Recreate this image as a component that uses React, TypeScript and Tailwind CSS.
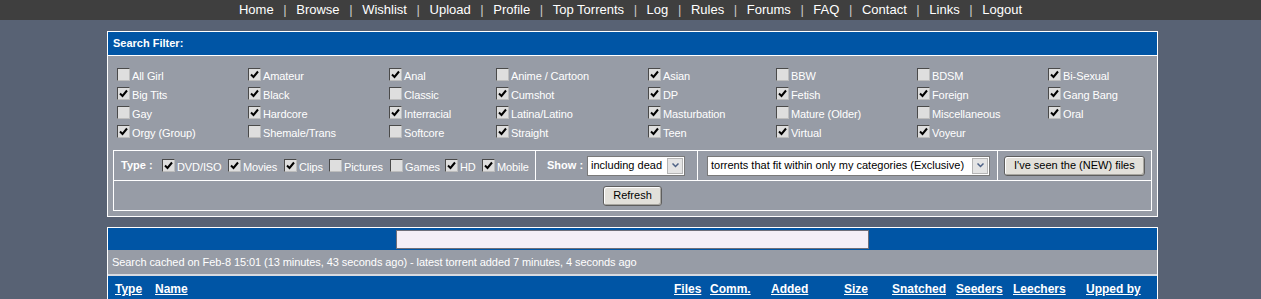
import React from 'react';

const navLinks = ['Home', 'Browse', 'Wishlist', 'Upload', 'Profile', 'Top Torrents', 'Log', 'Rules', 'Forums', 'FAQ', 'Contact', 'Links', 'Logout'];

// category rows, 8 columns each
const categories: [string, boolean][][] = [
  [['All Girl', false], ['Amateur', true], ['Anal', true], ['Anime / Cartoon', false], ['Asian', true], ['BBW', false], ['BDSM', false], ['Bi-Sexual', true]],
  [['Big Tits', true], ['Black', true], ['Classic', false], ['Cumshot', true], ['DP', true], ['Fetish', true], ['Foreign', true], ['Gang Bang', true]],
  [['Gay', false], ['Hardcore', true], ['Interracial', true], ['Latina/Latino', true], ['Masturbation', true], ['Mature (Older)', false], ['Miscellaneous', false], ['Oral', true]],
  [['Orgy (Group)', true], ['Shemale/Trans', false], ['Softcore', false], ['Straight', true], ['Teen', true], ['Virtual', true], ['Voyeur', true]],
];

const types: { label: string; checked: boolean; w: string }[] = [
  { label: 'DVD/ISO', checked: true, w: 'w-[66px]' },
  { label: 'Movies', checked: true, w: 'w-[56px]' },
  { label: 'Clips', checked: true, w: 'w-[45px]' },
  { label: 'Pictures', checked: false, w: 'w-[61px]' },
  { label: 'Games', checked: false, w: 'w-[55px]' },
  { label: 'HD', checked: true, w: 'w-[37px]' },
  { label: 'Mobile', checked: true, w: 'w-[48px]' },
];

const columns = [
  { label: 'Type', left: 115 },
  { label: 'Name', left: 155 },
  { label: 'Files', left: 674 },
  { label: 'Comm.', left: 710 },
  { label: 'Added', left: 771 },
  { label: 'Size', left: 844 },
  { label: 'Snatched', left: 892 },
  { label: 'Seeders', left: 956 },
  { label: 'Leechers', left: 1013 },
  { label: 'Upped by', left: 1086 },
];

function Box({ checked }: { checked: boolean }) {
  return (
    <span className="flex h-[13px] w-[13px] shrink-0 items-center justify-center border border-t-[#4a4a4a] border-l-[#4a4a4a] border-r-[#bdbdbd] border-b-[#bdbdbd] bg-[#dedede]">
      {checked && (
        <svg width="9" height="9" viewBox="0 0 9 9">
          <path d="M1 4.5 L3.5 7 L8 1.5" stroke="#000" strokeWidth="2" fill="none" />
        </svg>
      )}
    </span>
  );
}

function Check({ label, checked }: { label: string; checked: boolean }) {
  return (
    <label className="flex items-center gap-[2px] whitespace-nowrap">
      <Box checked={checked} />
      <span className="pt-[3px] tracking-[-0.1px]">{label}</span>
    </label>
  );
}

function Select({ value, width }: { value: string; width: string }) {
  return (
    <div className={`flex h-[20px] items-center border border-[#7a7a7a] bg-white text-black ${width}`}>
      <span className="flex-1 overflow-hidden whitespace-nowrap px-[3px] text-[11px]">{value}</span>
      <span className="m-[1px] flex h-[16px] w-[16px] shrink-0 items-center justify-center border border-[#b5b5b5] bg-[#e4e4e4]">
        <svg width="7" height="5" viewBox="0 0 7 5">
          <path d="M0.5 0.5 L3.5 3.5 L6.5 0.5" stroke="#4d6185" strokeWidth="1.5" fill="none" />
        </svg>
      </span>
    </div>
  );
}

function Button({ children }: { children: React.ReactNode }) {
  return (
    <button className="h-[20px] whitespace-nowrap rounded-[3px] border border-[#5e5e5e] bg-[#e2e0da] px-[9px] text-[11px] text-black shadow-[inset_1px_1px_0_#fff,inset_-1px_-1px_0_#a8a6a0]">
      {children}
    </button>
  );
}

export default function App() {
  return (
    <div className="min-h-[299px] bg-[#586274] pb-4 font-['Liberation_Sans',Arial,sans-serif] text-[11px] text-white">
      {/* top menu */}
      <nav className="flex h-[20px] items-center justify-center bg-[#3f3f3f] text-[13px]">
        {navLinks.map((link, i) => (
          <React.Fragment key={link}>
            {i > 0 && <span className="px-[9.6px] text-[#c8c8c8]">|</span>}
            <a className="cursor-pointer">{link}</a>
          </React.Fragment>
        ))}
      </nav>

      {/* Search filter */}
      <div className="ml-[107px] mt-[11px] w-[1051px] border border-white">
        <div className="flex h-[24px] items-center border-b border-white bg-[#0055a5] px-[5px] font-bold">Search Filter:</div>
        <div className="bg-[#979ca6] px-[5px] pb-[5px] pt-[8px]">
          <div className="grid grid-cols-[131px_141px_107px_152px_128px_141px_131px_1fr] pl-[4px]">
            {categories.flat().map(([label, checked]) => (
              <div key={label} className="h-[19px] pt-[1px]">
                <Check label={label} checked={checked} />
              </div>
            ))}
          </div>

          <div className="mt-[10px] border border-white">
            <div className="flex h-[30px] items-center border-b border-white">
              <div className="flex h-full w-[422px] shrink-0 items-center border-r border-white pl-[7px]">
                <span className="w-[41px] whitespace-nowrap font-bold">Type :</span>
                {types.map((t) => (
                  <span key={t.label} className={`${t.w} shrink-0`}>
                    <Check label={t.label} checked={t.checked} />
                  </span>
                ))}
              </div>
              <div className="flex h-full w-[162px] shrink-0 items-center gap-[4px] border-r border-white pl-[11px]">
                <span className="whitespace-nowrap font-bold">Show :</span>
                <Select value="including dead" width="w-[98px]" />
              </div>
              <div className="flex h-full w-[300px] shrink-0 items-center border-r border-white pl-[9px]">
                <Select value="torrents that fit within only my categories (Exclusive)" width="w-[283px]" />
              </div>
              <div className="flex h-full flex-1 items-center pl-[6px]">
                <Button>I've seen the (NEW) files</Button>
              </div>
            </div>
            <div className="flex h-[29px] items-center justify-center">
              <Button>Refresh</Button>
            </div>
          </div>
        </div>
      </div>

      {/* Torrent list */}
      <div className="ml-[107px] mt-[10px] w-[1051px] border border-white">
        <div className="flex h-[22px] items-center justify-center bg-[#0055a5]">
          <div className="h-[19px] w-[473px] border border-[#6f6f7a] bg-[#f4eff7]" />
        </div>
        <div className="flex h-[24px] items-center bg-[#979ca6] px-[4px] tracking-[-0.07px]">
          Search cached on Feb-8 15:01 (13 minutes, 43 seconds ago) - latest torrent added 7 minutes, 4 seconds ago
        </div>
        <div className="h-[2px] bg-[#d7dae0]" />
        <div className="relative h-[26px] bg-[#0055a5] text-[12px] font-bold">
          {columns.map((c) => (
            <a key={c.label} className="absolute top-[4px] cursor-pointer underline" style={{ left: c.left - 108 }}>
              {c.label}
            </a>
          ))}
        </div>
      </div>
    </div>
  );
}
